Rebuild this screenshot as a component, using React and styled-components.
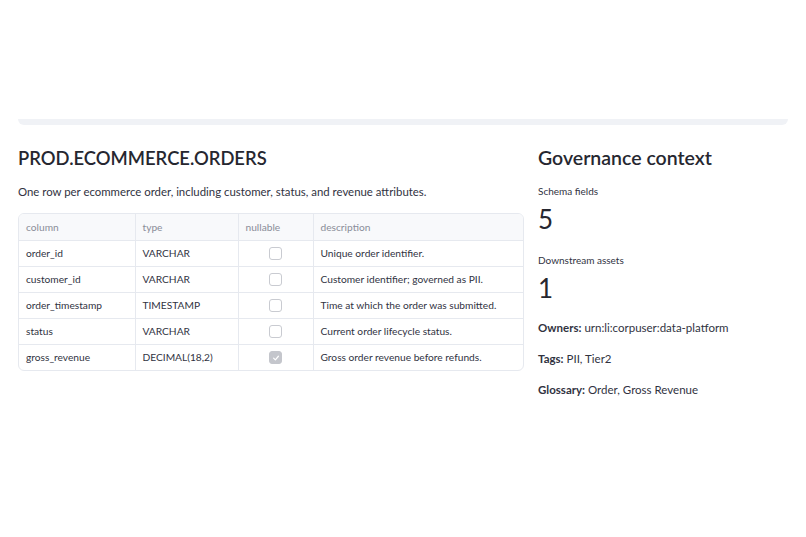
import React from 'react';
import styled, { createGlobalStyle } from 'styled-components';

const GlobalStyle = createGlobalStyle`
  html, body {
    margin: 0;
    padding: 0;
    background: #ffffff;
  }
  body {
    font-family: "Source Sans Pro", Lato, "Noto Sans", sans-serif;
    color: #31333f;
  }
`;

const fields = [
  { name: 'order_id', type: 'VARCHAR', nullable: false, description: 'Unique order identifier.' },
  { name: 'customer_id', type: 'VARCHAR', nullable: false, description: 'Customer identifier; governed as PII.' },
  { name: 'order_timestamp', type: 'TIMESTAMP', nullable: false, description: 'Time at which the order was submitted.' },
  { name: 'status', type: 'VARCHAR', nullable: false, description: 'Current order lifecycle status.' },
  { name: 'gross_revenue', type: 'DECIMAL(18,2)', nullable: true, description: 'Gross order revenue before refunds.' },
];

const Page = styled.div`
  padding: 0 18px;
  width: 770px;
`;

const TopBar = styled.div`
  margin-top: 119px;
  height: 6px;
  background: #f0f2f6;
  border-radius: 0 0 6px 6px;
`;

const Columns = styled.div`
  display: grid;
  grid-template-columns: 506px 250px;
  gap: 14px;
  margin-top: 19px;
`;

const Column = styled.section`
  display: flex;
  flex-direction: column;
`;

const Heading = styled.h2`
  margin: 0;
  font-size: ${(p) => p.$size || 19.5}px;
  line-height: 28px;
  font-weight: 600;
  color: #262730;
`;

const Caption = styled.p`
  margin: 11px 0 0;
  font-size: 11.4px;
  line-height: 18px;
`;

const TableFrame = styled.div`
  margin-top: 12px;
  border: 1px solid #e6e9ef;
  border-radius: 6px;
  overflow: hidden;
`;

const Table = styled.table`
  width: 100%;
  border-collapse: collapse;
  table-layout: fixed;
  font-size: 10.2px;
`;

const HeadCell = styled.th`
  box-sizing: border-box;
  height: 26px;
  padding: 0 7px;
  text-align: left;
  font-weight: 400;
  color: #8a8d99;
  background: #f8f9fb;
  border-left: ${(p) => (p.$first ? 'none' : '1px solid #e6e9ef')};
  width: ${(p) => (p.$w ? `${p.$w}px` : 'auto')};
`;

const Cell = styled.td`
  box-sizing: border-box;
  height: 26px;
  padding: 0 7px;
  border-top: 1px solid #e6e9ef;
  border-left: ${(p) => (p.$first ? 'none' : '1px solid #e6e9ef')};
  text-align: ${(p) => (p.$center ? 'center' : 'left')};
  white-space: nowrap;
  color: #31333f;
`;

const Check = styled.span`
  display: inline-flex;
  align-items: center;
  justify-content: center;
  vertical-align: middle;
  width: 11px;
  height: 11px;
  border-radius: 3px;
  border: 1px solid ${(p) => (p.$on ? '#c4c6cc' : '#c9cbd1')};
  background: ${(p) => (p.$on ? '#c4c6cc' : '#ffffff')};
`;

const MetricLabel = styled.div`
  margin-top: ${(p) => p.$gap}px;
  font-size: 10px;
  line-height: 16px;
`;

const MetricValue = styled.div`
  margin-top: 4px;
  font-size: 26px;
  line-height: 32px;
  font-weight: 400;
  color: #262730;
`;

const Fact = styled.p`
  margin: ${(p) => p.$gap}px 0 0;
  font-size: 11.5px;
  line-height: 18px;
  b {
    font-weight: 700;
  }
`;

function Checkbox({ on }) {
  return (
    <Check $on={on}>
      {on && (
        <svg width="8" height="8" viewBox="0 0 10 10" fill="none">
          <path d="M2 5.2 L4.2 7.3 L8 2.8" stroke="#ffffff" strokeWidth="1.5" strokeLinecap="round" strokeLinejoin="round" />
        </svg>
      )}
    </Check>
  );
}

export default function App() {
  return (
    <>
      <GlobalStyle />
      <Page>
        <TopBar />
        <Columns>
          <Column>
            <Heading $size={18.4}>PROD.ECOMMERCE.ORDERS</Heading>
            <Caption>One row per ecommerce order, including customer, status, and revenue attributes.</Caption>
            <TableFrame>
              <Table>
                <thead>
                  <tr>
                    <HeadCell $first $w={116}>column</HeadCell>
                    <HeadCell $w={103}>type</HeadCell>
                    <HeadCell $w={75}>nullable</HeadCell>
                    <HeadCell>description</HeadCell>
                  </tr>
                </thead>
                <tbody>
                  {fields.map((f) => (
                    <tr key={f.name}>
                      <Cell $first>{f.name}</Cell>
                      <Cell>{f.type}</Cell>
                      <Cell $center><Checkbox on={f.nullable} /></Cell>
                      <Cell>{f.description}</Cell>
                    </tr>
                  ))}
                </tbody>
              </Table>
            </TableFrame>
          </Column>
          <Column>
            <Heading>Governance context</Heading>
            <MetricLabel $gap={11}>Schema fields</MetricLabel>
            <MetricValue>5</MetricValue>
            <MetricLabel $gap={17}>Downstream assets</MetricLabel>
            <MetricValue>1</MetricValue>
            <Fact $gap={15}><b>Owners:</b> urn:li:corpuser:data-platform</Fact>
            <Fact $gap={13}><b>Tags:</b> PII, Tier2</Fact>
            <Fact $gap={13}><b>Glossary:</b> Order, Gross Revenue</Fact>
          </Column>
        </Columns>
      </Page>
    </>
  );
}
